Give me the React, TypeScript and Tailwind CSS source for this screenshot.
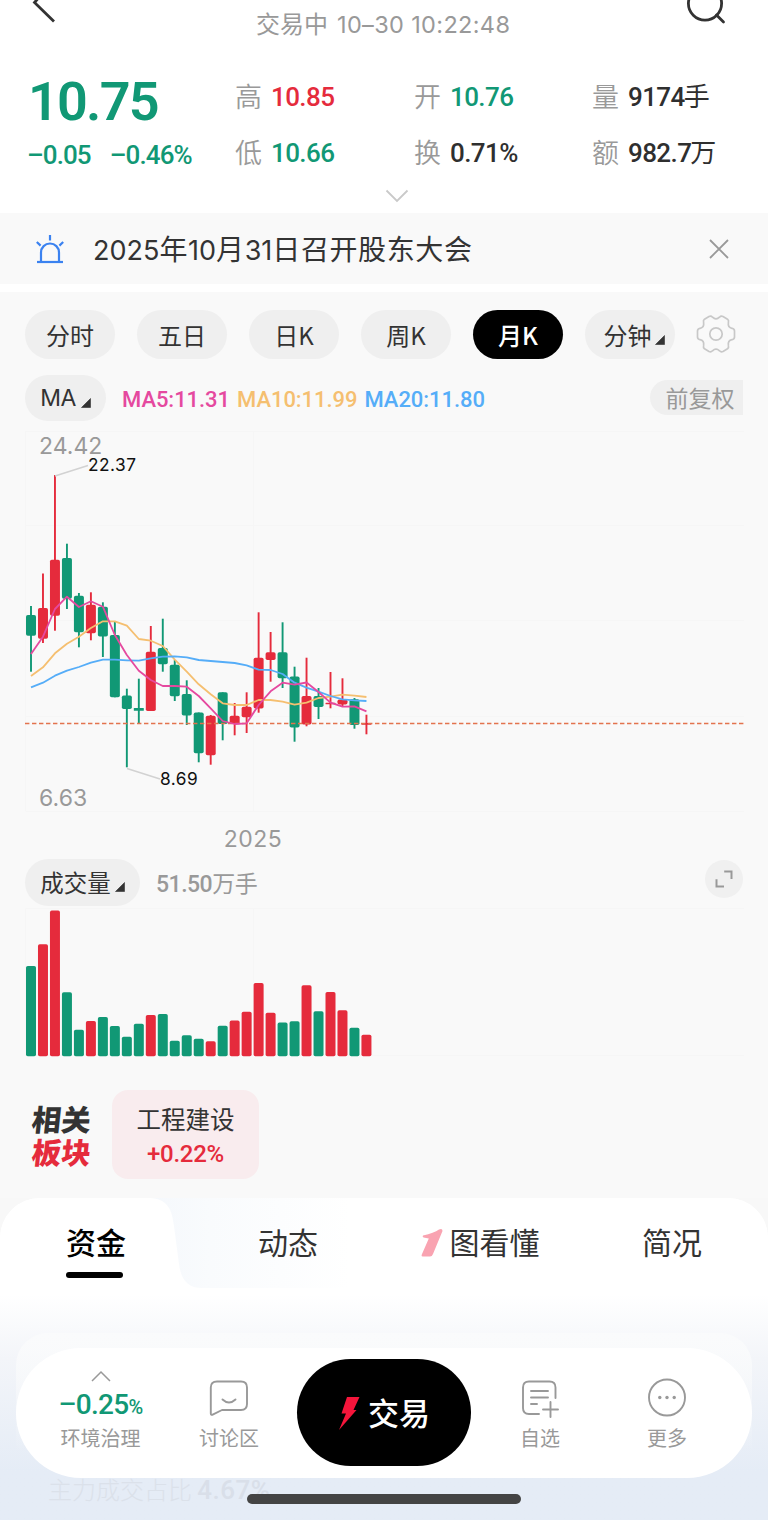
import type { ReactNode } from 'react'

const RED = '#e52b3c'
const GREEN = '#119875'

const STEP = 11.98
const FIRST_X = 31

interface Candle {
  up: boolean
  high: number
  top: number
  bottom: number
  low: number
  volume: number
}

// [up, wick top, body top, body bottom, wick bottom, volume bar top]
const rows: [number, number, number, number, number, number][] = [
  [0, 606, 615, 635.8, 671.7, 966],
  [1, 573.5, 608, 638.7, 643, 944.3],
  [1, 475, 559.7, 615.7, 630.7, 910.6],
  [0, 543.7, 558, 598.7, 609, 992.3],
  [0, 593, 595.7, 632.3, 647.3, 1029.7],
  [1, 592.3, 604.7, 633.3, 640.3, 1021],
  [0, 602.3, 606.7, 636.6, 657, 1017],
  [0, 621, 635, 697.3, 697.3, 1026],
  [0, 688.7, 695.5, 709, 767.3, 1036.7],
  [0, 678.7, 708, 710.7, 723.3, 1023.7],
  [1, 626, 651.7, 711, 711, 1015],
  [0, 618.7, 648, 664.3, 671.7, 1014],
  [0, 660, 664.7, 696.3, 701, 1040.7],
  [0, 680.3, 694, 715.5, 725, 1035.3],
  [0, 712.5, 712.5, 753.3, 762.3, 1038.7],
  [1, 715, 715.7, 755.3, 764.7, 1041.3],
  [0, 692.3, 692.3, 724, 740.3, 1025.7],
  [1, 703, 715.7, 724, 735.3, 1020.6],
  [1, 692.3, 706.8, 717.2, 733, 1011.7],
  [1, 612.3, 657.7, 708.5, 712.7, 983],
  [1, 632, 652.3, 660, 681.7, 1012.7],
  [0, 622.3, 652.3, 678.2, 688, 1022.6],
  [0, 666.7, 676.5, 727.6, 741.7, 1021.3],
  [1, 657.7, 696, 724.6, 726.3, 985.3],
  [0, 688, 696, 707, 719, 1011.3],
  [1, 672, 702.7, 704.2, 708.3, 992],
  [1, 678.3, 699.5, 704.6, 706, 1010.3],
  [0, 698, 699.3, 725, 728.7, 1027.7],
  [1, 714.7, 723, 724.7, 734.3, 1034.7],
]

const candles: Candle[] = rows.map(([up, high, top, bottom, low, volume]) => ({
  up: up === 1,
  high,
  top,
  bottom,
  low,
  volume,
}))

const ma5 = [654, 636.7, 609, 596.7, 607, 601.3, 606.7, 635, 655, 670.7, 680, 686, 686, 686.7, 696, 708.3, 721, 724, 723.3, 705, 691.3, 682.7, 684.7, 682.5, 692, 702.7, 706.7, 706.3, 711.3]
const ma10 = [676, 667.3, 653.3, 643.7, 636.7, 628, 621.3, 621.3, 625.7, 639, 640.7, 646, 659.7, 671.7, 684.3, 694.3, 703.3, 705, 705, 700, 700, 701.7, 704.7, 702.7, 698, 696.7, 694.7, 695.7, 697]
const ma20 = [687.3, 682.7, 675.7, 670.7, 667, 662.7, 659.7, 659.7, 660.3, 660.7, 658.3, 656.7, 656.3, 657.3, 660, 661, 662, 663, 665.3, 669.7, 670, 674, 682.7, 687.7, 691.7, 696, 699.3, 700.3, 701]

const cx = (i: number) => FIRST_X + i * STEP
const toPoints = (values: number[]) => values.map((y, i) => `${cx(i)},${y}`).join(' ')

const stats = [
  { label: '高', value: '10.85', color: 'text-[#e52b3c]' },
  { label: '开', value: '10.76', color: 'text-[#119875]' },
  { label: '量', value: '9174', unit: '手', color: 'text-[#2f2f2f]' },
  { label: '低', value: '10.66', color: 'text-[#119875]' },
  { label: '换', value: '0.71%', color: 'text-[#2f2f2f]' },
  { label: '额', value: '982.7', unit: '万', color: 'text-[#2f2f2f]' },
]

const periods = ['分时', '五日', '日K', '周K', '月K', '分钟']

function Corner({ className = '' }: { className?: string }) {
  return (
    <svg className={className} width="10" height="10" viewBox="0 0 10 10">
      <path d="M9.5 0.5V9.5H0.5Z" fill="#333" stroke="#333" strokeWidth="0.6" strokeLinejoin="round" />
    </svg>
  )
}

function Header() {
  return (
    <header className="h-[213px] bg-white">
      <div className="flex h-[50px] pl-[32px]">
        <svg width="24" height="24" viewBox="0 0 24 24" fill="none">
          <path d="M17 -14L2.5 2.5L22 21.5" stroke="#333" strokeWidth="2.8" />
        </svg>
        <div className="ml-[200px] w-[428px] whitespace-nowrap pt-[6px] text-[24px] leading-[34px] text-[#999]">
          交易中
          <span className="ml-[9px] font-['Inter',sans-serif] text-[23.5px] tracking-[0.35px]">10–30 10:22:48</span>
        </div>
        <svg width="42" height="26" viewBox="684 0 42 26" fill="none" stroke="#333" strokeWidth="2.8">
          <circle cx="705" cy="3.5" r="16.6" />
          <path d="M716.5 15L723.5 22" strokeLinecap="round" />
        </svg>
      </div>
      <div className="flex h-[130px] pl-[28px]">
        <div className="w-[207px] font-['Roboto','Noto_Sans_CJK_SC',sans-serif] text-[#119875]">
          <div className="pt-[26px] text-[54px] font-semibold leading-[52px] tracking-[-1.8px]">10.75</div>
          <div className="-ml-[1px] flex gap-[19px] whitespace-nowrap pt-[11px] text-[26px] font-medium leading-[32px] tracking-[-0.9px]">
            <span>–0.05</span>
            <span>–0.46%</span>
          </div>
        </div>
        <div className="grid grid-cols-[179px_178px_150px] grid-rows-[56px_56px] pt-[18px]">
          {stats.map(s => (
            <div key={s.label} className="flex items-center gap-[9px]">
              <span className="w-[27px] text-[27px] font-[350] text-[#999]">{s.label}</span>
              <span className={`pt-[2px] font-['Roboto','Noto_Sans_CJK_SC',sans-serif] text-[26px] font-medium tracking-[-0.6px] ${s.color}`}>
                {s.value}
                {s.unit && <span className="-ml-[1px] font-normal">{s.unit}</span>}
              </span>
            </div>
          ))}
        </div>
      </div>
      <div className="flex justify-center pl-[26px] pt-[9px]">
        <svg width="24" height="14" viewBox="0 0 24 14" fill="none">
          <path d="M1.5 1.5L12 12L22.5 1.5" stroke="#c9c9c9" strokeWidth="1.8" />
        </svg>
      </div>
    </header>
  )
}

function Digits({ children }: { children: ReactNode }) {
  return <span className="font-['Inter',sans-serif] text-[27px] tracking-[0px]">{children}</span>
}

function Notice() {
  return (
    <div className="flex h-[71px] items-center bg-[#f9f9f9] pl-[35px] pr-[38px]">
      <svg width="30" height="30" viewBox="0 0 30 30" fill="none" stroke="#3b82f0" strokeWidth="2.2">
        <path d="M6 27V18.5a9 9 0 0 1 18 0V27" />
        <path d="M2 28H28" />
        <path d="M15 1V6.5M1.8 8L5.6 11.6M28.2 8L24.4 11.6" />
      </svg>
      <span className="ml-[28px] pt-[1px] text-[28px] leading-[40px] tracking-[0.6px] text-[#333]">
        <Digits>2025</Digits>年<Digits>10</Digits>月<Digits>31</Digits>日召开股东大会
      </span>
      <svg className="ml-auto" width="22" height="22" viewBox="0 0 22 22" fill="none">
        <path d="M2 2L20 20M20 2L2 20" stroke="#999" strokeWidth="1.8" />
      </svg>
    </div>
  )
}

function PeriodTabs() {
  return (
    <div className="flex h-[49px] items-center gap-[22px] pl-[25px]">
      {periods.map(p => (
        <div
          key={p}
          className={`flex h-full w-[90px] items-center justify-center rounded-full text-[24px] ${
            p === '月K' ? 'bg-black font-medium text-white' : 'bg-[#efefef] text-[#333]'
          }`}
        >
          {p}
          {p === '分钟' && <Corner className="-mr-[8px] ml-[3px] mt-[10px]" />}
        </div>
      ))}
      <svg className="-ml-[1px] mb-[2px]" width="40" height="40" viewBox="0 0 40 40" fill="none" stroke="#c8c8c8" strokeWidth="1.7" strokeLinejoin="round">
        <path d="M13 2.5 Q15 1.5 16.5 3.2 Q20 6.5 23.5 3.2 Q25 1.5 27 2.5 L31.5 5.2 Q33 6.4 32.4 8.6 Q31.6 13.4 36 14.3 Q38.5 15 38.5 17 V23 Q38.5 25 36 25.7 Q31.6 26.6 32.4 31.4 Q33 33.6 31.5 34.8 L27 37.5 Q25 38.5 23.5 36.8 Q20 33.5 16.5 36.8 Q15 38.5 13 37.5 L8.5 34.8 Q7 33.6 7.6 31.4 Q8.4 26.6 4 25.7 Q1.5 25 1.5 23 V17 Q1.5 15 4 14.3 Q8.4 13.4 7.6 8.6 Q7 6.4 8.5 5.2 Z" />
        <circle cx="20" cy="20" r="6.2" />
      </svg>
    </div>
  )
}

function CandleChart() {
  return (
    <svg className="block" width="768" height="398" viewBox="0 424 768 398" fontFamily="Inter, sans-serif">
      <path d="M25.5 431.5H744M25.5 525.5H744M25.5 620.5H744M25.5 716.5H744M25.5 811.5H744M25.5 431V811M253.5 431V811" stroke="#f6f6f6" fill="none" />
      {candles.map((c, i) => (
        <g key={i} fill={c.up ? RED : GREEN}>
          <rect x={cx(i) - 0.95} y={c.high} width="1.9" height={c.low - c.high} />
          <rect x={cx(i) - 5} y={c.top} width="10" height={c.bottom - c.top} rx={c.bottom - c.top > 4 ? 1.8 : 0.5} />
        </g>
      ))}
      <path d="M25 723.4H744" stroke="#e3734e" strokeWidth="1.5" strokeDasharray="4.4 2.6" />
      <text x="39" y="454" fontSize="23" fill="#999">24.42</text>
      <text x="39" y="806" fontSize="23" letterSpacing="0.1" fill="#999">6.63</text>
      <g fill="none" strokeWidth="1.8" strokeLinejoin="round">
        <polyline points={toPoints(ma10)} stroke="#f5bf70" />
        <polyline points={toPoints(ma20)} stroke="#55adf8" />
        <polyline points={toPoints(ma5)} stroke="#e5499f" />
      </g>
      <path d="M55 476L88 465.5M127 768.5L160 779" stroke="#d2d2d2" strokeWidth="1.6" />
      <text x="88" y="471" fontSize="17.3" letterSpacing="0.5" fill="#111">22.37</text>
      <text x="160" y="784.5" fontSize="17.3" letterSpacing="0.5" fill="#111">8.69</text>
    </svg>
  )
}

function VolumeChart() {
  return (
    <svg className="block" width="768" height="154" viewBox="0 906 768 154">
      <path d="M25.5 1055.5V908.5H744M253.5 908V1055M25 1055.5H744" stroke="#f6f6f6" fill="none" />
      {candles.map((c, i) => (
        <rect key={i} x={cx(i) - 5} y={c.volume} width="10" height={1056.2 - c.volume} rx="1.8" fill={c.up ? RED : GREEN} />
      ))}
    </svg>
  )
}

function ChartPanel() {
  return (
    <section className="mt-[8px] h-[906px] bg-[#f9f9f9] pt-[18px]">
      <PeriodTabs />
      <div className="mt-[14px] flex h-[49px] items-center pl-[25px] pr-[25px]">
        <div className="flex h-[46px] w-[81px] items-center justify-center gap-[5px] rounded-full bg-[#efefef] text-[#333]">
          <span className="pt-[2px] font-['Inter',sans-serif] text-[23px] tracking-[-0.6px]">MA</span>
          <Corner className="mt-[10px]" />
        </div>
        <div className="ml-[16px] flex gap-[8px] pt-[3px] font-['Roboto',sans-serif] text-[22px] font-medium tracking-[-0.05px]">
          <span className="text-[#e5499f]">MA5:11.31</span>
          <span className="-ml-[1px] text-[#f5bf70]">MA10:11.99</span>
          <span className="-ml-[1px] text-[#55adf8]">MA20:11.80</span>
        </div>
        <div className="ml-auto flex h-[35px] w-[93px] items-center justify-center rounded-l-full bg-[#efefef] pl-[7px] text-[23px] text-[#999]">
          前复权
        </div>
      </div>
      <div className="mt-[2px] h-[398px]">
        <CandleChart />
      </div>
      <div className="h-[33px] w-[506px] pt-[1px] text-center font-['Inter',sans-serif] text-[23px] leading-[33px] tracking-[0.5px] text-[#999]">
        2025
      </div>
      <div className="mt-[4px] flex h-[47px] items-center pl-[25px] pr-[25px]">
        <div className="flex h-full w-[115px] items-center justify-center gap-[4px] rounded-full bg-[#efefef] text-[23.5px] text-[#333]">
          成交量
          <Corner className="mt-[9px]" />
        </div>
        <span className="ml-[16px] pt-[5px] font-['Roboto','Noto_Sans_CJK_SC',sans-serif] text-[23px] font-medium tracking-[-0.5px] text-[#999]">
          51.50<span className="font-normal">万手</span>
        </span>
        <div className="mb-[7px] ml-auto flex h-[38px] w-[38px] items-center justify-center rounded-full bg-[#f0f0f0]">
          <svg width="18" height="18" viewBox="0 0 18 18" fill="none" stroke="#999" strokeWidth="2">
            <path d="M9.2 1.5H16.5V9M1.5 9.2V16.5H9" />
          </svg>
        </div>
      </div>
      <VolumeChart />
      <div className="mt-[30px] flex h-[89px] items-center pl-[32px]">
        <div className="w-[80px] text-[29.5px] font-black leading-[33px] text-[#333]">
          <div className="w-[60px] -skew-x-6">相关</div>
          <div className="w-[60px] -skew-x-6 text-[#e52b3c]">板块</div>
        </div>
        <div className="flex h-full w-[147px] flex-col items-center justify-center rounded-[16px] bg-[#f9ecee] pt-[3px]">
          <span className="text-[24.5px] leading-[34px] text-[#333]">工程建设</span>
          <span className="pt-[1px] font-['Roboto',sans-serif] text-[24px] font-medium leading-[34px] tracking-[-0.3px] text-[#e52b3c]">+0.22%</span>
        </div>
      </div>
    </section>
  )
}

function DetailTabs() {
  return (
    <section className="h-[322px] bg-[#f8f8f8]">
      <div className="h-full rounded-t-[40px] bg-linear-to-b from-white from-30% via-[#f3f5f9] via-50% to-[#e5ecf6] to-85%">
        <div className="relative flex h-[90px] overflow-hidden rounded-t-[40px] bg-white">
          {/* curved edge of the selected tab */}
          <svg className="absolute left-[150px] top-0" width="200" height="90" viewBox="0 0 200 90">
            <defs>
              <linearGradient id="tabShade">
                <stop offset="0" stopColor="#f5f8fc" />
                <stop offset="0.3" stopColor="#f9fbfd" />
                <stop offset="1" stopColor="#ffffff" />
              </linearGradient>
            </defs>
            <path d="M0 0C18 1 22 12 24 28L29 66C31 82 38 90 52 90H200V0Z" fill="url(#tabShade)" />
          </svg>
          <div className="relative flex w-[192px] flex-col items-center pt-[22px]">
            <span className="text-[30px] font-medium leading-[42px] text-black">资金</span>
            <span className="mr-[3px] mt-[10px] h-[6px] w-[57px] rounded-full bg-black" />
          </div>
          <div className="relative flex w-[192px] justify-center pt-[22px] text-[30px] leading-[42px] text-[#333]">动态</div>
          <div className="flex w-[192px] justify-center gap-[7px] pt-[22px] text-[30px] leading-[42px] text-[#333]">
            <svg className="mt-[8px]" width="22" height="30" viewBox="0 0 22 30">
              <path d="M2 7.5Q13 5 18 1.5Q21.5 0 21.5 3L12 26Q11 28.5 9 28.5H1.5Q0 28.5 0.8 26.5L7.8 10.5L2.5 9.5Q1 8.5 2 7.5Z" fill="#f9a3b1" />
            </svg>
            图看懂
          </div>
          <div className="flex w-[192px] justify-center pt-[22px] text-[30px] leading-[42px] text-[#333]">简况</div>
        </div>
        <div className="mx-[16px] mt-[45px] h-[120px] rounded-t-[32px] bg-linear-to-b from-[#fafbfc] to-white/0" />
        <div className="-mt-[1px] pl-[48px] pt-[13px] text-[24px] font-light leading-[48px] text-[#dbe1ea]">
          主力成交占比 <span className="font-['Roboto',sans-serif] text-[26px] font-medium tracking-[0.5px] text-[#d9dfe9]">4.67%</span>
        </div>
      </div>
    </section>
  )
}

function NavItem({ icon, label, className }: { icon: ReactNode; label: string; className: string }) {
  return (
    <div className={`flex flex-col items-center ${className}`}>
      <div className="flex h-[42px] items-center">{icon}</div>
      <span className="mt-[5px] text-[20px] leading-[28px] text-[#999]">{label}</span>
    </div>
  )
}

function BottomBar() {
  return (
    <nav className="absolute left-[16px] top-[1348px] flex h-[130px] w-[736px] rounded-full bg-white">
      <div className="flex w-[169px] flex-col items-center pt-[22px]">
        <svg width="20" height="12" viewBox="0 0 20 12" fill="none">
          <path d="M1 11L10 2L19 11" stroke="#999" strokeWidth="1.5" />
        </svg>
        <span className="mt-[7px] font-['Roboto',sans-serif] text-[28px] font-medium leading-[32px] tracking-[-0.7px] text-[#119875]">
          –0.25<span className="text-[20px]">%</span>
        </span>
        <span className="mt-[1px] text-[20px] leading-[28px] text-[#999]">环境治理</span>
      </div>
      <NavItem
        className="ml-[1px] w-[86px] pt-[29px]"
        label="讨论区"
        icon={
          <svg width="40" height="38" viewBox="0 0 40 38" fill="none" stroke="#999" strokeWidth="1.9" strokeLinejoin="round" strokeLinecap="round">
            <path d="M8 2.5H32Q38 2.5 38 8.5V25Q38 31 32 31H13L3.2 35.8Q1.8 36 1.8 34.5V8.5Q1.8 2.5 8 2.5Z" />
            <path d="M13.5 20.5Q20 26.5 26.5 20.5" />
          </svg>
        }
      />
      <div className="ml-[25px] mt-[11px] flex h-[107px] w-[174px] items-center justify-center rounded-full bg-black">
        <svg width="24" height="36" viewBox="0 0 24 36">
          <path d="M9 2H21.5L15.5 15H18.5L1 35L8 18.5H3.5Z" fill="#f5153b" />
        </svg>
        <span className="ml-[6px] text-[31px] font-medium text-white">交易</span>
      </div>
      <NavItem
        className="ml-[29px] w-[80px] pt-[29px]"
        label="自选"
        icon={
          <svg width="38" height="40" viewBox="0 0 38 40" fill="none" stroke="#999" strokeWidth="1.9" strokeLinecap="round">
            <path d="M34.5 20V9.5Q34.5 3.5 28.5 3.5H8Q2 3.5 2 9.5V30Q2 36 8 36H18" />
            <path d="M10 13H27M10 19.5H27M10 26H16M22 31.5H37M29.5 24V39" />
          </svg>
        }
      />
      <NavItem
        className="ml-[47px] w-[80px] pt-[29px]"
        label="更多"
        icon={
          <svg width="40" height="40" viewBox="0 0 40 40" fill="none">
            <circle cx="20" cy="19.5" r="18" stroke="#999" strokeWidth="1.9" />
            <g fill="#999">
              <circle cx="12.8" cy="19.5" r="1.7" />
              <circle cx="20" cy="19.5" r="1.7" />
              <circle cx="27.2" cy="19.5" r="1.7" />
            </g>
          </svg>
        }
      />
    </nav>
  )
}

export default function App() {
  return (
    <div className="h-[1521px] w-[769px] overflow-hidden bg-white">
      <div className="relative h-[1520px] w-[768px] overflow-hidden bg-white font-['Noto_Sans_CJK_SC',sans-serif]">
        <Header />
        <Notice />
        <ChartPanel />
        <DetailTabs />
        <BottomBar />
        <div className="absolute left-[247px] top-[1494px] h-[10px] w-[274px] rounded-full bg-[#444]" />
      </div>
    </div>
  )
}
